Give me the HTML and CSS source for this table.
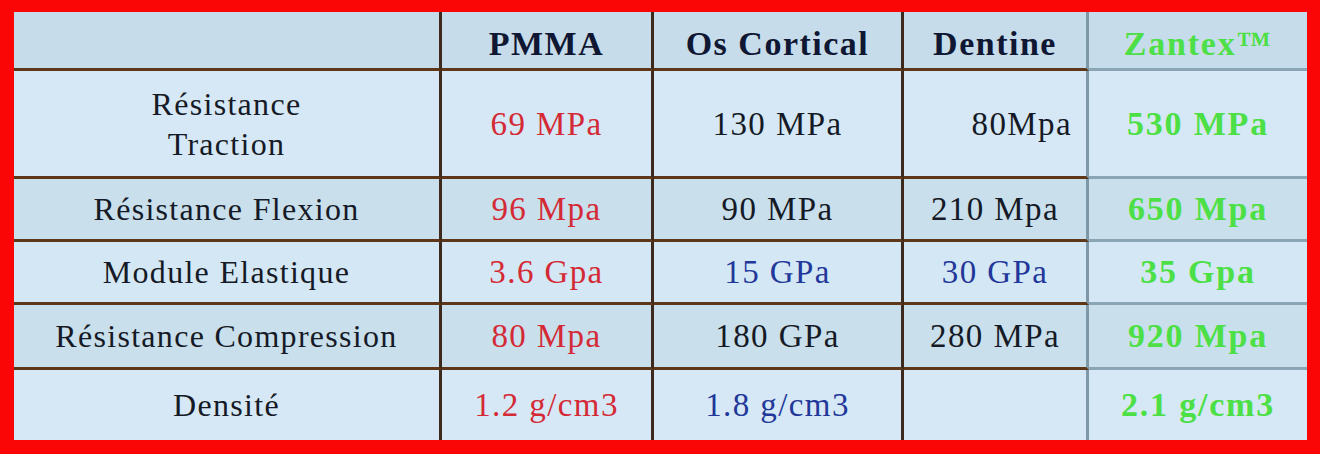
FILE: index.html
```html
<!DOCTYPE html>
<html lang="fr">
<head>
<meta charset="utf-8">
<title>Comparatif Zantex</title>
<link rel="stylesheet" href="styles.css">
</head>
<body>
<div class="frame">
  <div class="table">
    <div class="cell head label"></div>
    <div class="cell head">PMMA</div>
    <div class="cell head">Os Cortical</div>
    <div class="cell head c4">Dentine</div>
    <div class="cell head c5 zantex">Zantex™</div>

    <div class="cell r1 label">Résistance<br>Traction</div>
    <div class="cell r1 val red">69 MPa</div>
    <div class="cell r1 val">130 MPa</div>
    <div class="cell r1 val c4 right">80Mpa</div>
    <div class="cell r1 c5 zantex">530 MPa</div>

    <div class="cell r2 label">Résistance Flexion</div>
    <div class="cell r2 val red">96 Mpa</div>
    <div class="cell r2 val">90 MPa</div>
    <div class="cell r2 val c4">210 Mpa</div>
    <div class="cell r2 c5 zantex">650 Mpa</div>

    <div class="cell r3 label">Module Elastique</div>
    <div class="cell r3 val red">3.6 Gpa</div>
    <div class="cell r3 val blue">15 GPa</div>
    <div class="cell r3 val c4 blue">30 GPa</div>
    <div class="cell r3 c5 zantex">35 Gpa</div>

    <div class="cell r4 label">Résistance Compression</div>
    <div class="cell r4 val red">80 Mpa</div>
    <div class="cell r4 val">180 GPa</div>
    <div class="cell r4 val c4">280 MPa</div>
    <div class="cell r4 c5 zantex">920 Mpa</div>

    <div class="cell r5 label last">Densité</div>
    <div class="cell r5 val red last">1.2 g/cm3</div>
    <div class="cell r5 val blue last">1.8 g/cm3</div>
    <div class="cell r5 c4 last"></div>
    <div class="cell r5 c5 zantex last">2.1 g/cm3</div>
  </div>
</div>
</body>
</html>
```

FILE: styles.css
```css
html, body {
  margin: 0;
  padding: 0;
  background: #fb0606;
}

.frame {
  width: 1320px;
  height: 454px;
  box-sizing: border-box;
  padding: 12px 13px 14px 14px;
}

.table {
  display: grid;
  grid-template-columns: 428px 212px 250px 185px 218px;
  grid-template-rows: 59px 108px 63px 63px 65px 70px;
  width: 1293px;
  height: 428px;
  font-family: "Liberation Serif", "Times New Roman", serif;
  color: #151a26;
  box-shadow: inset 0 0 0 1px #eef5fa;
}

.cell {
  display: flex;
  align-items: center;
  justify-content: center;
  text-align: center;
  font-size: 32px;
  letter-spacing: 1px;
  line-height: 40px;
  border-right: 3px solid #3d2a1c;
  border-bottom: 3px solid #5e3618;
  box-sizing: border-box;
}

.cell.c4 {
  border-right-color: #7f98a8;
}

.cell.c5 {
  border-right: none;
  border-bottom-color: #8aa5b6;
}

.cell.last {
  border-bottom: none;
}

.head {
  background: #c7dcea;
  font-weight: bold;
  font-size: 34px;
  letter-spacing: 1.5px;
  color: #0f1733;
  padding-top: 8px;
}

.r1 { background: #d6e8f5; }
.r2 { background: #c9dfec; }
.r3 { background: #d4e7f4; }
.r4 { background: #c9dfec; }
.r5 { background: #d6e8f5; }

.label {
  letter-spacing: 1.3px;
}

.val {
  font-size: 33px;
  letter-spacing: 1.4px;
}

.red {
  color: #d42a36;
}

.blue {
  color: #22379a;
}

.zantex {
  color: #4ddf46;
  font-weight: bold;
  font-size: 34px;
  letter-spacing: 1.8px;
}

.right {
  justify-content: flex-end;
  padding-right: 14px;
}
```
